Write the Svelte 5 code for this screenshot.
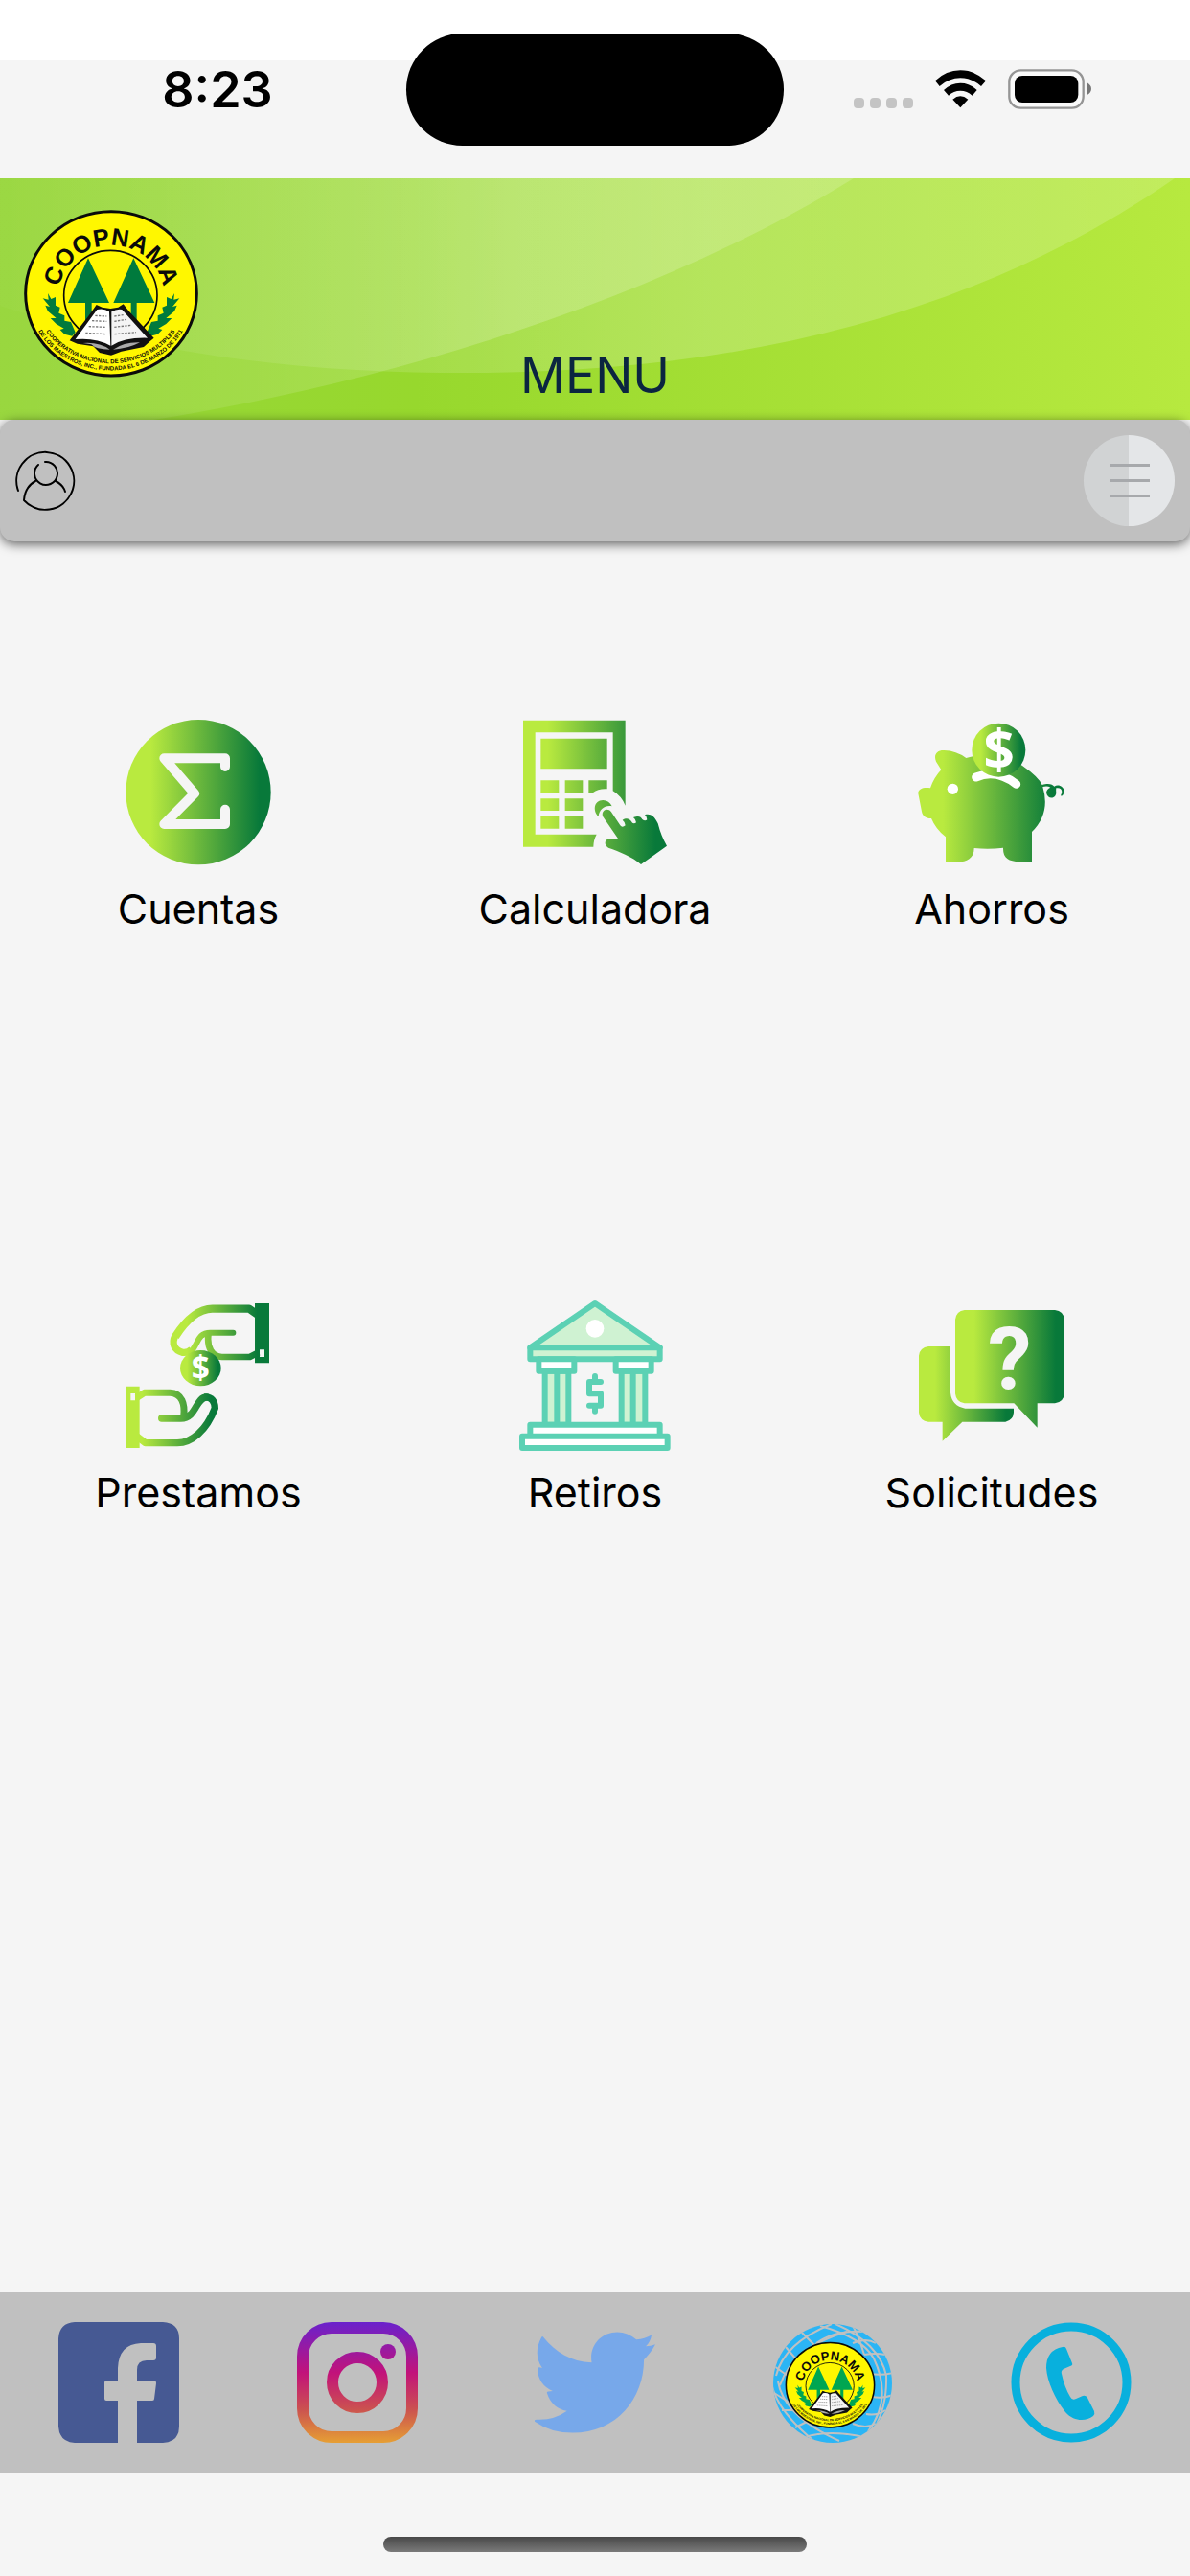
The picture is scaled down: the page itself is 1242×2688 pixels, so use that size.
<script lang="ts">
	const menu = ['Cuentas', 'Calculadora', 'Ahorros', 'Prestamos', 'Retiros', 'Solicitudes'];

	const boxes: Record<string, string> = {
		Cuentas: '84 84 474 474',
		Calculadora: '156 84 474 474',
		Ahorros: '78 84 474 474',
		Prestamos: '114 81 474 474',
		Retiros: '66 81 474 474',
		Solicitudes: '138 81 474 474'
	};
</script>

{#snippet logo(id: string, green: string)}
	<defs>
		<path id="{id}-top" d="M153 325 A165 157 0 0 1 483 325" />
		<path id="{id}-in" d="M83 368 A238 213 0 0 0 549 368" />
		<path id="{id}-out" d="M65 373 A256 232 0 0 0 567 373" />
	</defs>
	<ellipse cx="318" cy="319" rx="268" ry="257" fill="#fff700" stroke="#0a0a0a" stroke-width="9" />
	<ellipse cx="316" cy="325" rx="146" ry="141" fill="none" stroke="#0a0a0a" stroke-width="5" />
	<g fill={green}>
		<path d="M246 208 L312 348 H257 V410 H237 V348 H183Z" />
		<path d="M388 208 L454 348 H398 V410 H380 V348 H325Z" />
		<path
			d="M120 318 L130 336 L144 330 L144 356 L158 362 L154 380 L172 388 L172 404 L192 408 L206 440 L196 452 L172 446 L158 432 L170 428 L146 414 L128 396 L146 396 L120 374 L112 356 L126 360 L104 334 L122 338Z"
		/>
		<path
			d="M516 318 L506 336 L492 330 L492 356 L478 362 L482 380 L464 388 L464 404 L444 408 L430 440 L440 452 L464 446 L478 432 L466 428 L490 414 L508 396 L490 396 L516 374 L524 356 L510 360 L532 334 L514 338Z"
		/>
	</g>
	<path
		d="M188 466 L248 388 L272 354 L290 362 L316 366 L340 362 L356 352 L372 372 L452 458 L440 468 L420 486 L350 500 L318 512 L282 504 L262 484 L212 476Z"
		fill="#111"
	/>
	<path d="M274 369 Q296 364 312 376 L316 482 Q270 456 206 462Z" fill="#fff" />
	<path d="M352 369 Q336 366 319 376 L319 482 Q360 456 432 458Z" fill="#f4f4f4" />
	<g stroke="#777" stroke-width="4" stroke-dasharray="7 4" fill="none">
		<path d="M268 388 L304 390 M258 404 L304 406 M248 422 L302 424 M238 442 L300 446" />
		<path d="M328 390 L356 386 M328 406 L366 400 M328 424 L382 418 M328 446 L396 440" />
	</g>
	<path d="M230 474 Q280 470 314 494 Q270 494 256 478Z" fill="#aaa" />
	<path d="M408 472 Q360 470 324 494 Q370 492 408 472Z" fill="#aaa" />
	<g class="seal" text-anchor="middle">
		<text class="seal-name"><textPath href="#{id}-top" startOffset="50%">COOPNAMA</textPath></text>
		<text class="seal-small">
			<textPath href="#{id}-in" startOffset="50%">COOPERATIVA NACIONAL DE SERVICIOS MULTIPLES</textPath>
		</text>
		<text class="seal-small">
			<textPath href="#{id}-out" startOffset="50%"
				>DE LOS MAESTROS, INC., FUNDADA EL 6 DE MARZO DE 1971</textPath
			>
		</text>
	</g>
{/snippet}

{#snippet icon(name: string)}
	<svg class="menu-icon" viewBox={boxes[name]} aria-hidden="true">
		{#if name === 'Cuentas'}
			<circle cx="321" cy="320" r="227" fill="url(#verde)" />
			<path
				d="M405 240 V214 H214 L309 324 L214 420 H405 V374"
				fill="none"
				stroke="#f5f5f5"
				stroke-width="30"
				stroke-linecap="round"
				stroke-linejoin="round"
			/>
		{:else if name === 'Calculadora'}
			<linearGradient id="calc" gradientUnits="userSpaceOnUse" x1="168" y1="0" x2="618" y2="0">
				<stop offset="0.17" stop-color="#b9ea3f" />
				<stop offset="0.92" stop-color="#08793a" />
			</linearGradient>
			<g fill="url(#calc)">
				<path d="M168 95 H488 V362 Q476 332 449 316 V133 H206 V452 H398 Q388 470 388 491 H168Z" />
				<path d="M223 152 H431 V247 H223Z" />
				<path d="M223 283 H280 V322 H223Z M299 283 H355 V322 H299Z" />
				<path d="M373 283 H431 V310 Q404 308 386 322 H373Z" />
				<path d="M223 340 H280 V378 H223Z M299 340 H355 V378 H299Z" />
				<path d="M223 396 H280 V434 H223Z M299 396 H355 V434 H299Z" />
				<path d="M404 396 C386 380 388 346 418 345 Q438 346 446 364 C424 360 406 374 404 396Z" />
				<path
					d="M418 397 C410 378 432 366 444 382 L472 424 Q478 432 488 424 Q488 414 479 407 C490 400 500 402 506 410 Q512 422 522 415 Q522 406 513 399 C530 394 536 396 541 405 Q550 412 556 406 Q556 396 549 391 C566 386 578 394 590 418 Q600 458 618 488 L537 546 C510 522 470 506 435 494 C418 484 424 464 442 466 Q454 464 467 468Z"
				/>
			</g>
		{:else if name === 'Ahorros'}
			<path
				d="M85 324 C84 308 104 303 123 307 Q134 274 157 250 Q150 238 141 224 C132 202 144 188 166 189 Q204 190 235 213 Q330 186 410 236 Q462 272 473 297 C494 290 506 296 511 302 C524 292 544 304 541 318 Q540 334 531 331 C540 314 532 304 517 307 Q516 314 517 322 C516 342 490 344 486 322 Q487 310 499 305 Q490 299 475 303 Q500 386 441 444 V538 H402 C368 536 350 528 351 494 Q306 500 260 495 C260 528 236 538 210 538 H171 V460 Q140 436 126 402 C106 402 98 392 96 380Z"
				fill="url(#verde)"
			/>
			<circle cx="193" cy="310" r="17" fill="#fff" />
			<path d="M266 273 Q330 246 392 295" fill="none" stroke="#fff" stroke-width="27" stroke-linecap="round" />
			<circle cx="337" cy="188" r="84" fill="url(#verde)" />
			<text class="coin-big" x="338" y="248" text-anchor="middle">$</text>
		{:else if name === 'Prestamos'}
			<linearGradient id="mano1" gradientUnits="userSpaceOnUse" x1="262" y1="0" x2="573" y2="0">
				<stop offset="0.17" stop-color="#b9ea3f" />
				<stop offset="0.88" stop-color="#08793a" />
			</linearGradient>
			<linearGradient id="mano2" gradientUnits="userSpaceOnUse" x1="125" y1="0" x2="415" y2="0">
				<stop offset="0.17" stop-color="#b9ea3f" />
				<stop offset="0.92" stop-color="#08793a" />
			</linearGradient>
			<g fill="none" stroke="url(#mano1)" stroke-linejoin="round">
				<path stroke-width="25" d="M540 128 L510 107 H395 C350 107 314 140 279 194" />
				<path stroke-width="22" d="M279 190 C266 216 276 238 302 244 Q318 246 330 234" />
				<path stroke-width="18" stroke-linecap="round" d="M332 236 C350 216 350 182 388 182 H460" />
				<path stroke-width="20" d="M383 184 C376 230 395 257 425 258 H512 L540 244" />
			</g>
			<path
				fill="url(#mano1)"
				fill-rule="evenodd"
				d="M528 90 H573 V277 H528Z M543 235 V258 H558 V235Z"
			/>
			<ellipse cx="358" cy="293" rx="64" ry="56" fill="url(#verde)" />
			<text class="coin-small" x="358" y="328" text-anchor="middle">$</text>
			<g fill="none" stroke="url(#mano2)" stroke-linejoin="round">
				<path stroke-width="21" d="M158 386 L182 370 H262 C300 372 310 405 305 445" />
				<path stroke-width="22" stroke-linecap="round" d="M236 450 H296 C346 450 342 384 377 384" />
				<path stroke-width="22" d="M370 384 C394 382 403 400 403 418 C376 488 330 527 285 527 H185 L158 506" />
			</g>
			<path
				fill="#b9ea3f"
				fill-rule="evenodd"
				d="M125 350 H167 V543 H125Z M139 372 V394 H153 V372Z"
			/>
		{:else if name === 'Retiros'}
			<g fill="#cff2d2" stroke="#5cd1b4" stroke-width="18" stroke-linejoin="round">
				<path d="M100 229 L303 90 L506 229Z" />
				<path d="M100 229 H506 V265 H100Z" />
				<path d="M146 302 H184 V470 H146Z M184 302 H220 V470 H184Z" />
				<path d="M386 302 H422 V470 H386Z M422 302 H460 V470 H422Z" />
				<g fill="#fff">
					<path d="M127 265 H238 V302 H127Z M368 265 H479 V302 H368Z" />
					<path d="M100 470 H506 V508 H100Z" />
					<path d="M75 506 H530 V543 H75Z" />
				</g>
			</g>
			<circle cx="303" cy="169" r="28" fill="#fff" />
			<path
				d="M303 318 V336 M321 336 H285 V373 H321 V410 H285 M303 410 V428"
				fill="none"
				stroke="#5cd1b4"
				stroke-width="18"
				stroke-linecap="round"
				stroke-linejoin="round"
			/>
		{:else}
			<path
				d="M177 225 H246 V370 Q250 412 292 419 H444 V432 Q442 456 418 461 H283 L221 521 V461 H177 Q150 458 147 432 V254 Q150 228 177 225Z"
				fill="url(#verde)"
			/>
			<path
				d="M290 111 H573 Q600 114 603 141 V373 Q600 400 573 403 H518 V479 L445 403 H290 Q264 400 261 373 V141 Q264 114 290 111Z"
				fill="url(#verde)"
			/>
			<text class="question" x="431" y="356" text-anchor="middle">?</text>
		{/if}
	</svg>
{/snippet}

<svg class="defs" aria-hidden="true">
	<linearGradient id="verde">
		<stop offset="0.17" stop-color="#b9ea3f" />
		<stop offset="0.92" stop-color="#08793a" />
	</linearGradient>
</svg>

<div class="screen">
	<div class="status">
		<span class="time">8:23</span>
		<span class="island"></span>
		<div class="signals">
			<span class="dots"><i></i><i></i><i></i><i></i></span>
			<svg width="53" height="40" viewBox="378 96 159 120" aria-hidden="true">
				<path d="M378 130 Q412 97 457 97 Q502 97 537 130 L522 147 Q492 121 457 121 Q422 121 392 147Z" />
				<path d="M405 159 Q428 137 457 137 Q486 137 509 159 L494 176 Q478 161 457 161 Q436 161 420 176Z" />
				<path d="M433 188 Q457 168 481 188 L457 214Z" />
			</svg>
			<svg width="87" height="42" viewBox="606 93 261 126" aria-hidden="true">
				<rect x="610" y="97" width="232" height="118" rx="36" fill="#fafafa" stroke="#959595" stroke-width="7" />
				<rect x="627" y="114" width="199" height="84" rx="24" />
				<path d="M854 136 Q867 144 867 155 Q867 166 854 174Z" fill="#777" />
			</svg>
		</div>
	</div>

	<header>
		<svg class="waves" viewBox="0 0 1242 252" preserveAspectRatio="none" aria-hidden="true">
			<linearGradient id="base">
				<stop offset="0" stop-color="#97d63b" />
				<stop offset="0.35" stop-color="#97d82d" />
				<stop offset="1" stop-color="#b7e93f" />
			</linearGradient>
			<linearGradient id="wave">
				<stop offset="0" stop-color="#fff" stop-opacity="0.02" />
				<stop offset="0.6" stop-color="#fff" stop-opacity="0.2" />
				<stop offset="1" stop-color="#fff" stop-opacity="0.16" />
			</linearGradient>
			<rect width="1242" height="252" fill="url(#base)" />
			<path d="M0 133 C180 190 340 204 507 203 C760 200 1010 150 1226 0 H0Z" fill="url(#wave)" />
			<path d="M160 252 C400 214 680 130 891 0 H0 V252Z" fill="url(#wave)" />
		</svg>
		<svg class="logo" viewBox="42 54 552 528" role="img" aria-label="COOPNAMA">
			{@render logo('sello', '#007a3d')}
		</svg>
		<h1>MENU</h1>
	</header>

	<div class="toolbar">
		<button class="user" aria-label="Perfil">
			<svg width="64" height="64" viewBox="0 0 64 64" aria-hidden="true">
				<path
					d="M3 42 A30 30 0 1 1 9 52 Q10 38 21 32 M42 32 Q50 36 52 43 M24 15 A12 12 0 1 0 31 12"
					fill="none"
					stroke="#000"
					stroke-width="2"
					stroke-linecap="round"
					stroke-linejoin="round"
				/>
			</svg>
		</button>
		<button class="hamburger" aria-label="Abrir menu">
			<span></span><span></span><span></span>
		</button>
	</div>

	<main>
		{#each menu as name}
			<button class="item">
				{@render icon(name)}
				{name}
			</button>
		{/each}
	</main>

	<footer>
		<a href="#facebook" aria-label="Facebook">
			<svg viewBox="0 0 126 126" aria-hidden="true">
				<path
					fill="#465993"
					d="M17 0 H109 Q126 1 126 17 V109 Q126 125 109 126 H82 V82 H98 Q100 82 100 80 L102 64 Q102 61 100 61 H82 V50 Q82 40 92 40 H99 Q102 40 102 37 V25 Q102 22 99 22 H86 Q63 23 62 48 V61 H50 Q48 61 48 63 V80 Q48 82 50 82 H62 V126 H17 Q1 125 0 109 V17 Q1 1 17 0Z"
				/>
			</svg>
		</a>
		<a href="#instagram" aria-label="Instagram">
			<svg viewBox="0 0 126 126" aria-hidden="true">
				<linearGradient id="insta" gradientUnits="userSpaceOnUse" x1="0" y1="0" x2="0" y2="126">
					<stop offset="0" stop-color="#6a22cc" />
					<stop offset="0.42" stop-color="#c2127a" />
					<stop offset="0.72" stop-color="#cb5150" />
					<stop offset="1" stop-color="#e69f34" />
				</linearGradient>
				<g fill="none" stroke="url(#insta)" stroke-width="12">
					<rect x="6" y="6" width="114" height="114" rx="30" />
					<circle cx="63" cy="63" r="26" />
				</g>
				<circle cx="95" cy="31" r="8" fill="url(#insta)" />
			</svg>
		</a>
		<a href="#twitter" aria-label="Twitter">
			<svg viewBox="0 -10 127 126" aria-hidden="true">
				<path
					fill="#77a8ea"
					d="M9 5 C22 21 38 31 60 32 C57 14 70 0 87 0 Q98 0 107 8 Q116 7 123 3 Q122 10 117 15 Q122 15 127 13 Q123 21 115 29 C115 70 86 106 40 106 Q17 106 0 94 Q-1 92 2 92 Q20 93 34 83 Q18 80 13 64 Q12 62 19 62 Q4 56 3 39 Q3 36 8 38 Q-2 23 7 6 Q8 4 9 5Z"
				/>
			</svg>
		</a>
		<a href="#web" aria-label="COOPNAMA web">
			<svg viewBox="0 0 126 126" aria-hidden="true">
				<clipPath id="globo"><circle cx="63" cy="64" r="62" /></clipPath>
				<g clip-path="url(#globo)">
					<rect width="126" height="126" fill="#2bb5f5" />
					<g fill="none" stroke="#c0c0c0" stroke-width="2">
						<path d="M4 56 Q12 22 62 2 M8 66 Q22 26 78 10 M0 68 Q8 96 46 126 M6 62 Q12 98 70 124" />
						<path d="M30 10 L46 26 M14 26 L26 40 M2 46 L16 56 M2 74 L18 84 M10 92 L30 92 M24 110 L36 104" />
						<path d="M50 4 Q94 16 106 38 Q126 80 100 114 M66 2 Q112 22 119 56 Q120 88 106 112 M84 4 Q90 14 96 34" />
						<path d="M46 22 Q66 8 96 10 M84 22 Q98 16 108 22 M96 34 Q108 32 118 34 M102 54 Q114 56 126 53" />
						<path d="M104 78 Q116 80 126 76 M98 96 Q110 98 118 92 M84 106 Q98 112 108 106 M34 120 Q60 112 96 120" />
					</g>
				</g>
				<svg x="13" y="18" width="95" height="95" viewBox="42 54 552 528">
					{@render logo('globo-sello', '#00a651')}
				</svg>
			</svg>
		</a>
		<a href="#telefono" aria-label="Telefono">
			<svg viewBox="0 0 126 126" aria-hidden="true">
				<circle cx="63" cy="63" r="58" fill="none" stroke="#08b0dd" stroke-width="9" />
				<path
					fill="#08b0dd"
					d="M54 26 Q57 25 58 28 L64 43 Q65 45 62 46 L55 49 Q52 51 53 54 Q56 68 62 78 Q64 82 68 80 L75 77 Q78 76 80 79 L87 93 Q88 96 86 98 C78 104 66 104 57 94 C46 80 38 62 37 48 Q37 29 54 26Z"
				/>
			</svg>
		</a>
	</footer>

	<div class="home"><span></span></div>
</div>

<style>
	:global(body) {
		margin: 0;
		background: #f5f5f5;
	}

	.screen {
		display: flex;
		flex-direction: column;
		min-height: 100vh;
		font-family: Inter, 'Liberation Sans', sans-serif;
		color: #000;
	}

	button {
		padding: 0;
		border: 0;
		background: none;
		font: inherit;
		color: inherit;
		cursor: pointer;
	}

	.defs {
		position: absolute;
		width: 0;
		height: 0;
	}

	.status {
		display: grid;
		grid-template-columns: 1fr 394px 1fr;
		align-items: center;
		height: 186px;
		background: linear-gradient(#fff 63px, #f5f5f5 63px);
	}

	.time {
		padding-left: 30px;
		text-align: center;
		font-size: 52px;
		font-weight: 600;
	}

	.island {
		height: 117px;
		border-radius: 59px;
		background: #000;
	}

	.signals {
		display: flex;
		align-items: center;
		justify-content: flex-end;
		gap: 23px;
		padding-right: 103px;
	}

	.dots {
		display: flex;
		gap: 6px;
		padding-top: 28px;
	}

	.dots i {
		width: 11px;
		height: 11px;
		border-radius: 4px;
		background: #c4c4c4;
	}

	header {
		display: grid;
		height: 252px;
	}

	header > * {
		grid-area: 1 / 1;
	}

	.waves {
		width: 100%;
		height: 252px;
	}

	.logo {
		width: 184px;
		height: 176px;
		margin: 32px 24px;
	}

	h1 {
		align-self: end;
		justify-self: center;
		margin: 0 0 14px;
		font-size: 52px;
		line-height: 64px;
		font-weight: 400;
		color: #0b2540;
	}

	.seal {
		font-family: 'Liberation Sans', Arial, sans-serif;
		fill: #0a0a0a;
	}

	.seal-name {
		font-size: 76px;
		font-weight: 700;
	}

	.seal-small {
		font-size: 18px;
		font-weight: 700;
	}

	.toolbar {
		position: relative;
		display: flex;
		align-items: center;
		justify-content: space-between;
		padding: 16px;
		border-radius: 15px;
		background: #c0c0c0;
		box-shadow: 0 3px 12px rgba(0, 0, 0, 0.6);
	}

	.user,
	.user svg {
		display: block;
	}

	.hamburger {
		display: flex;
		flex-direction: column;
		align-items: center;
		justify-content: center;
		gap: 13px;
		width: 95px;
		height: 95px;
		border-radius: 50%;
		background: linear-gradient(90deg, #d1d3d4 50%, #e4e6e8 50%);
	}

	.hamburger span {
		width: 42px;
		height: 3px;
		background: #a7a9ac;
	}

	main {
		flex: 1;
		display: grid;
		grid-template-columns: repeat(3, 1fr);
		grid-auto-rows: 609px;
		align-items: start;
		padding-top: 183px;
	}

	.item {
		display: flex;
		flex-direction: column;
		align-items: center;
		gap: 14px;
		font-size: 43px;
		line-height: 56px;
	}

	.menu-icon {
		width: 158px;
		height: 158px;
		overflow: visible;
	}

	.coin-big,
	.coin-small {
		font-family: 'Open Sans', sans-serif;
		font-weight: 700;
		fill: #fff;
	}

	.coin-big {
		font-size: 170px;
	}

	.coin-small {
		font-size: 100px;
	}

	.question {
		font-family: Roboto, sans-serif;
		font-size: 274px;
		font-weight: 700;
		fill: #f5f5f5;
	}

	footer {
		display: grid;
		grid-template-columns: repeat(5, 1fr);
		justify-items: center;
		padding: 31px 0 32px;
		background: #c0c0c0;
	}

	footer a,
	footer svg {
		display: block;
	}

	footer a > svg {
		width: 126px;
		height: 126px;
	}

	.home {
		display: flex;
		justify-content: center;
		padding: 66px 0 25px;
	}

	.home span {
		width: 442px;
		height: 16px;
		border-radius: 8px;
		background: linear-gradient(#484848, #7a7a7a);
	}
</style>
